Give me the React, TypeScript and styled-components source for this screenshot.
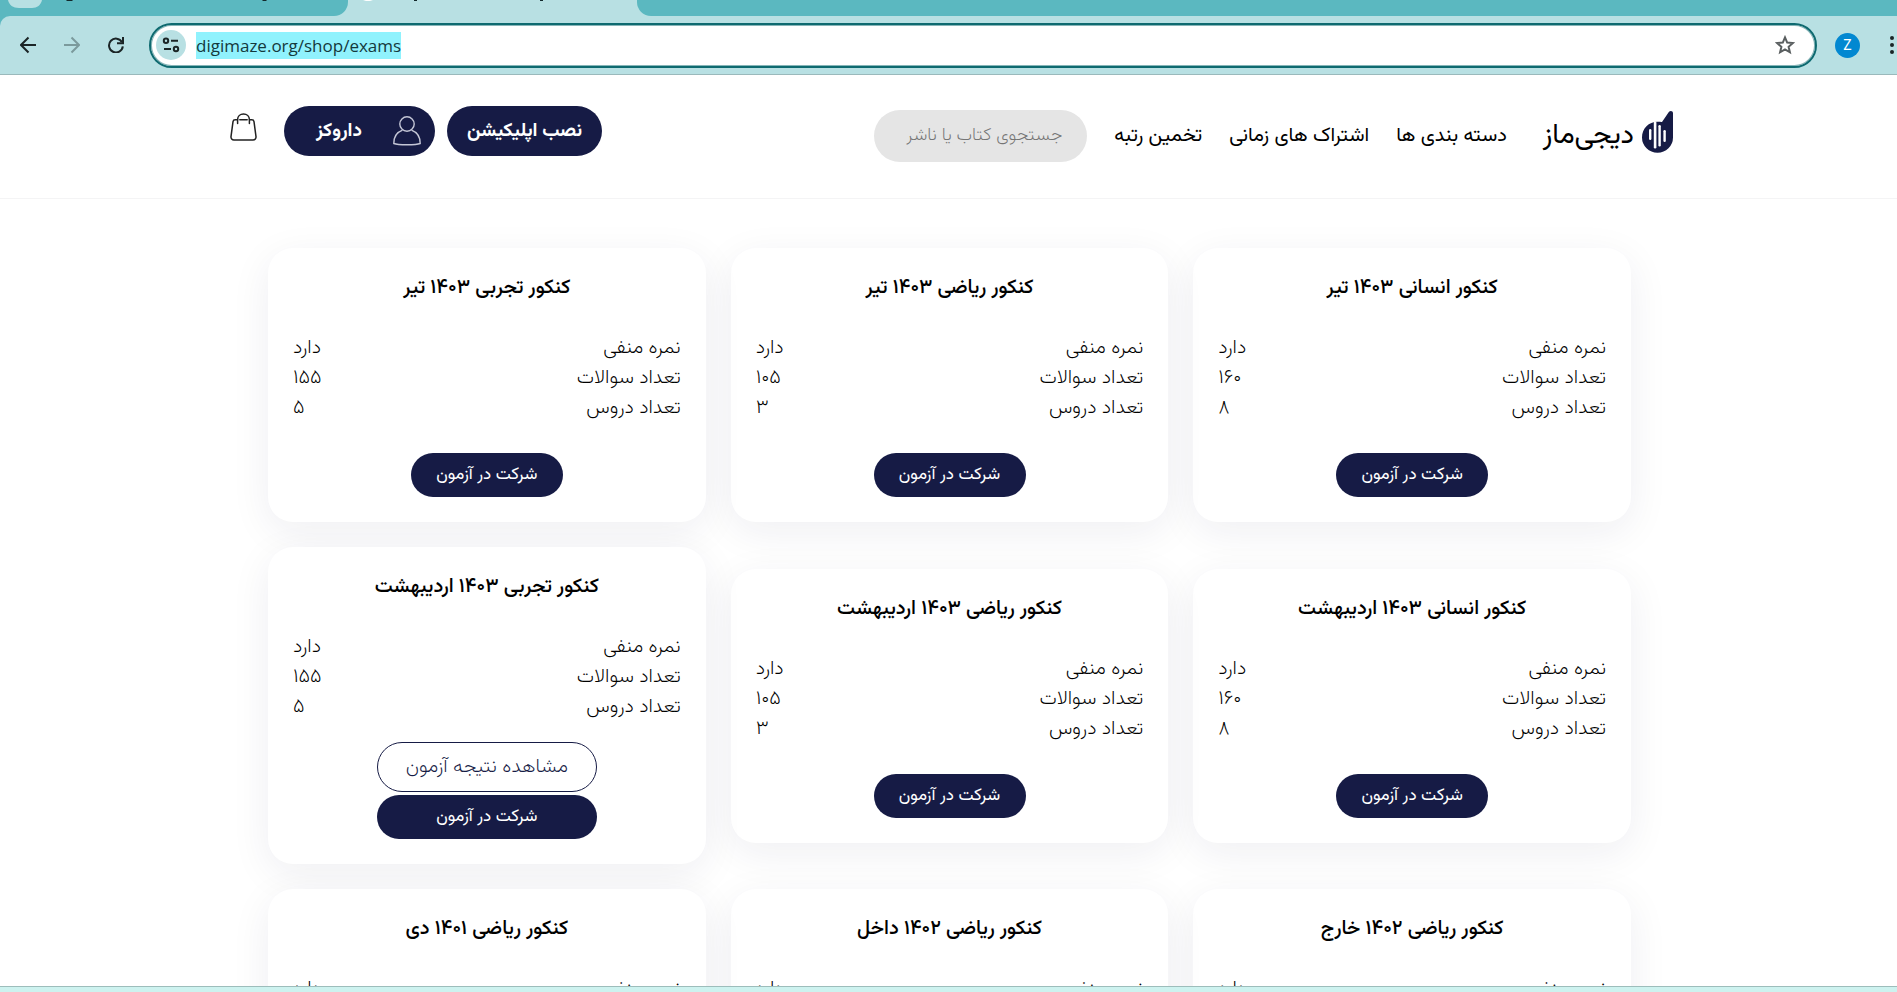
import React from 'react';
import styled, { createGlobalStyle } from 'styled-components';

const navy = '#161b45';
const persian = 'Vazirmatn, "DejaVu Sans", sans-serif';

const GlobalStyle = createGlobalStyle`
  * { box-sizing: border-box; }
  body { margin: 0; background: #fff; }
  button, input { font-family: inherit; }
`;

const Window = styled.div`
  height: 100vh;
  display: flex;
  flex-direction: column;
  overflow: hidden;
`;

/* ---------- browser chrome ---------- */

const TabStrip = styled.div`
  height: 16px;
  flex: none;
  display: flex;
  background: #b8e0e3;
`;

const BackgroundTab = styled.div`
  width: 348px;
  background: #5bb8c0;
  border-bottom-right-radius: 14px;
`;

const ActiveTab = styled.div`
  width: 289px;
`;

const StripRest = styled.div`
  flex: 1;
  background: #5bb8c0;
  border-bottom-left-radius: 14px;
`;

const ToolbarBack = styled.div`
  flex: none;
  background: #5bb8c0;
`;

const Toolbar = styled.div`
  height: 59px;
  display: flex;
  align-items: center;
  padding-left: 17px;
  background: #b8e0e3;
  border-bottom: 1px solid #9ab9bb;
  border-top-left-radius: 10px;
`;

const ToolButton = styled.button<{ $dim?: boolean }>`
  width: 21px;
  height: 24px;
  margin-right: 23px;
  padding: 0;
  border: 0;
  background: none;
  color: ${p => (p.$dim ? '#7b9a9c' : '#1b2526')};
  display: flex;
  align-items: center;
  justify-content: center;
`;

const AddressBar = styled.div`
  flex: 1;
  height: 45px;
  display: flex;
  align-items: center;
  padding: 0 20px 0 5px;
  background: #fff;
  border: 2px solid #0e6a70;
  border-radius: 23px;
  box-shadow: inset 0 0 0 1px #86b5b8;
`;

const SiteInfo = styled.button`
  width: 30px;
  height: 30px;
  padding: 0;
  border: 0;
  border-radius: 50%;
  background: #b8e0e3;
  display: flex;
  align-items: center;
  justify-content: center;
`;

const Url = styled.div`
  flex: 1;
  margin-left: 10px;
`;

const UrlText = styled.span`
  display: inline-block;
  background: #90f2fd;
  color: #14393c;
  font: 17px/27px "Open Sans", sans-serif;
`;

const StarButton = styled.button`
  padding: 0;
  border: 0;
  background: none;
  display: flex;
`;

const Avatar = styled.button`
  width: 25px;
  height: 25px;
  margin-left: 18px;
  padding: 0;
  border: 0;
  border-radius: 50%;
  background: #0288d1;
  color: #fff;
  font: 14px/25px Roboto, sans-serif;
`;

const MenuButton = styled.button`
  margin: 0 3px 0 30px;
  padding: 0;
  border: 0;
  background: none;
  display: flex;
`;

const BottomEdge = styled.div`
  flex: none;
  height: 6px;
  background: #cdf2ef;
  border-top: 1px solid #9dbdbb;
`;

/* ---------- site ---------- */

const Page = styled.div`
  flex: 1;
  min-height: 0;
  overflow-y: auto;
  scrollbar-width: none;
  direction: rtl;
  font-family: ${persian};
  color: #000;
`;

const Header = styled.header`
  height: 124px;
  display: flex;
  align-items: flex-start;
  justify-content: space-between;
  padding: 31px 224px 0 230px;
  border-bottom: 1px solid #f4f4f5;
  @media (max-width: 1400px) { padding-left: 24px; padding-right: 24px; }
`;

const Nav = styled.nav`
  display: flex;
  align-items: center;
  gap: 27px;
  height: 52px;
  margin-top: 4px;
`;

const Logo = styled.a`
  display: flex;
  align-items: flex-start;
  gap: 8px;
  margin-left: 9px;
  color: #000;
  font-size: 28px;
  line-height: 50px;
  text-decoration: none;
`;

const NavLink = styled.a`
  color: #000;
  font-size: 20px;
  line-height: 30px;
  text-decoration: none;
  white-space: nowrap;
`;

const Search = styled.input`
  width: 213px;
  height: 52px;
  padding: 0 25px;
  border: 0;
  border-radius: 26px;
  background: #e5e5e5;
  font-size: 18px;
  font-weight: 200;
  &::placeholder { color: #757575; opacity: 1; }
`;

const Account = styled.div`
  display: flex;
  align-items: flex-start;
  gap: 12px;
`;

const HeaderButton = styled.button<{ $width: number }>`
  width: ${p => p.$width}px;
  height: 50px;
  padding: 0 14px;
  border: 0;
  border-radius: 25px;
  background: ${navy};
  color: #fff;
  font-size: 19px;
  font-weight: 700;
  display: flex;
  align-items: center;
  justify-content: center;
`;

const UserName = styled.span`
  flex: 1;
  text-align: start;
  padding-right: 31px;
`;

const BagButton = styled.button`
  margin: 7px 0 0 0;
  padding: 0 15px 0 0;
  border: 0;
  background: none;
  display: flex;
`;

const Exams = styled.main`
  display: grid;
  grid-template-columns: repeat(3, 1fr);
  align-items: center;
  gap: 25px;
  padding: 49px 266px 49px 268px;
  @media (max-width: 1400px) { padding-left: 24px; padding-right: 24px; }
`;

const Card = styled.article`
  padding: 25px;
  border-radius: 25px;
  background: #fff;
  box-shadow: 0 10px 40px rgba(22, 27, 69, 0.07);
  display: flex;
  flex-direction: column;
  align-items: center;
`;

const CardTitle = styled.h2`
  margin: 0 0 30px;
  font-size: 20px;
  line-height: 30px;
  font-weight: 500;
`;

const Facts = styled.dl`
  align-self: stretch;
  margin: 0;
  font-size: 20px;
  line-height: 30px;
  font-weight: 200;
`;

const Fact = styled.div`
  display: flex;
  justify-content: space-between;
  dd { margin: 0; }
`;

const Actions = styled.div<{ $double: boolean }>`
  display: flex;
  flex-direction: column;
  gap: 3px;
  width: ${p => (p.$double ? 220 : 152)}px;
  padding-top: ${p => (p.$double ? 20 : 30)}px;
`;

const StartButton = styled.button`
  height: 44px;
  padding: 0;
  border: 0;
  border-radius: 22px;
  background: ${navy};
  color: #fff;
  font-size: 17px;
`;

const ResultButton = styled.button`
  height: 50px;
  padding: 0;
  border: 1px solid ${navy};
  border-radius: 25px;
  background: #fff;
  color: ${navy};
  font-size: 20px;
  font-weight: 200;
`;

type Exam = { title: string; questions: string; lessons: string; taken?: boolean };

const exams: Exam[] = [
  { title: 'کنکور انسانی ۱۴۰۳ تیر', questions: '۱۶۰', lessons: '۸' },
  { title: 'کنکور ریاضی ۱۴۰۳ تیر', questions: '۱۰۵', lessons: '۳' },
  { title: 'کنکور تجربی ۱۴۰۳ تیر', questions: '۱۵۵', lessons: '۵' },
  { title: 'کنکور انسانی ۱۴۰۳ اردیبهشت', questions: '۱۶۰', lessons: '۸' },
  { title: 'کنکور ریاضی ۱۴۰۳ اردیبهشت', questions: '۱۰۵', lessons: '۳' },
  { title: 'کنکور تجربی ۱۴۰۳ اردیبهشت', questions: '۱۵۵', lessons: '۵', taken: true },
  { title: 'کنکور ریاضی ۱۴۰۲ خارج', questions: '۱۰۵', lessons: '۳' },
  { title: 'کنکور ریاضی ۱۴۰۲ داخل', questions: '۱۰۵', lessons: '۳' },
  { title: 'کنکور ریاضی ۱۴۰۱ دی', questions: '۱۰۵', lessons: '۳' },
];

const ExamCard = ({ exam }: { exam: Exam }) => (
  <Card>
    <CardTitle>{exam.title}</CardTitle>
    <Facts>
      <Fact><dt>نمره منفی</dt><dd>دارد</dd></Fact>
      <Fact><dt>تعداد سوالات</dt><dd>{exam.questions}</dd></Fact>
      <Fact><dt>تعداد دروس</dt><dd>{exam.lessons}</dd></Fact>
    </Facts>
    <Actions $double={!!exam.taken}>
      {exam.taken && <ResultButton>مشاهده نتیجه آزمون</ResultButton>}
      <StartButton>شرکت در آزمون</StartButton>
    </Actions>
  </Card>
);

const ArrowIcon = ({ flip }: { flip?: boolean }) => (
  <svg width="16" height="18" viewBox="0 0 16 18" fill="none" stroke="currentColor" strokeWidth="2">
    {flip ? <path d="M0 9H14.5M7.5 1.5L15 9L7.5 16.5" /> : <path d="M16 9H1.5M8.5 1.5L1 9L8.5 16.5" />}
  </svg>
);

const ReloadIcon = () => (
  <svg width="16" height="16" viewBox="0 0 16 16" fill="none" stroke="currentColor" strokeWidth="2">
    <path d="M14 5.2A6.9 6.9 0 1 0 14.8 9.3" />
    <path d="M15 0V6.2H9" />
  </svg>
);

const TuneIcon = () => (
  <svg width="18" height="16" viewBox="0 0 18 16" fill="none" stroke="#1b2526" strokeWidth="2">
    <circle cx="4" cy="3.8" r="2.2" />
    <path d="M9 3.8H16M2 12H9" />
    <circle cx="14" cy="12" r="2.2" />
  </svg>
);

const StarIcon = () => (
  <svg width="20" height="20" viewBox="0 0 20 20" fill="none" stroke="#5a5f60" strokeWidth="2">
    <path d="M10 2.4L12.2 7.6L17.9 8.1L13.6 11.8L14.9 17.3L10 14.4L5.1 17.3L6.4 11.8L2.1 8.1L7.8 7.6Z" />
  </svg>
);

const LogoMark = () => (
  <svg width="31" height="42" viewBox="0 0 31 42">
    <path fill={navy} d="M27 0.8C28.6 -0.6 31 0 31 2.3V26.5A15.5 15.2 0 0 1 0 26.5C0 17.5 6.8 10.8 15.5 10.8C17.5 10.8 19 11 20 11Z" />
    <g fill="#fff">
      <rect x="7" y="18" width="2.4" height="11" rx="1.2" />
      <rect x="11.8" y="10.5" width="2.6" height="27" rx="1.2" />
      <rect x="16.4" y="14" width="2.4" height="21.5" rx="1.2" />
      <rect x="21.4" y="19" width="2.4" height="12" rx="1.2" />
    </g>
  </svg>
);

const UserIcon = () => (
  <svg width="28" height="30" viewBox="0 0 28 30" fill="none" stroke="#c4c6d6" strokeWidth="1.4">
    <circle cx="14" cy="8" r="7.2" />
    <path d="M9.5 14.2C4.5 16 0.8 20.8 0.8 27.5C5 29.2 23 29.2 27.2 27.5C27.2 20.8 23.5 16 18.5 14.2" />
  </svg>
);

const BagIcon = () => (
  <svg width="27" height="28" viewBox="0 0 27 28" fill="none" stroke="#222" strokeWidth="1.5" strokeLinecap="round">
    <path d="M7.5 6.8H5.2C4 6.8 3.2 7.4 3 8.6L1 23.6C0.8 25.6 2 27 4 27H23C25 27 26.2 25.6 26 23.6L24 8.6C23.8 7.4 23 6.8 21.8 6.8H19.5M9.8 6.8H17.2" />
    <path d="M7.6 10.5V6.6C7.6 3.3 10.2 1 13.5 1C16.8 1 19.4 3.3 19.4 6.6V10.5" />
  </svg>
);

export default function App() {
  return (
    <Window>
      <GlobalStyle />
      <TabStrip>
        <BackgroundTab>
          <svg width="340" height="16" viewBox="0 0 340 16">
            <path d="M8 0H42C41 5 37 8 32 8H19C13 8 9 5 8 0Z" fill="#b8e0e3" />
            <path d="M66 0H73L72 1H67ZM262 0H267L266 1H263Z" fill="#12292b" />
          </svg>
        </BackgroundTab>
        <ActiveTab>
          <svg width="280" height="16" viewBox="0 0 280 16">
            <path d="M15 0H25L22 1H18Z" fill="#fff" />
            <path d="M66 0H69V1H66ZM192 0H195V1H192Z" fill="#12292b" />
          </svg>
        </ActiveTab>
        <StripRest />
      </TabStrip>
      <ToolbarBack>
        <Toolbar>
          <ToolButton aria-label="Back"><ArrowIcon /></ToolButton>
          <ToolButton aria-label="Forward" $dim><ArrowIcon flip /></ToolButton>
          <ToolButton aria-label="Reload"><ReloadIcon /></ToolButton>
          <AddressBar>
            <SiteInfo aria-label="Site information"><TuneIcon /></SiteInfo>
            <Url><UrlText>digimaze.org/shop/exams</UrlText></Url>
            <StarButton aria-label="Bookmark"><StarIcon /></StarButton>
          </AddressBar>
          <Avatar>Z</Avatar>
          <MenuButton aria-label="Menu">
            <svg width="4" height="18" viewBox="0 0 4 18" fill="#1b2526">
              <circle cx="2" cy="2" r="2" /><circle cx="2" cy="9" r="2" /><circle cx="2" cy="16" r="2" />
            </svg>
          </MenuButton>
        </Toolbar>
      </ToolbarBack>
      <Page lang="fa">
        <Header>
          <Nav>
            <Logo href="#"><LogoMark /><span>دیجی‌ماز</span></Logo>
            <NavLink href="#">دسته بندی ها</NavLink>
            <NavLink href="#">اشتراک های زمانی</NavLink>
            <NavLink href="#">تخمین رتبه</NavLink>
            <Search type="text" aria-label="جستجو" placeholder="جستجوی کتاب یا ناشر" />
          </Nav>
          <Account>
            <HeaderButton $width={155}>نصب اپلیکیشن</HeaderButton>
            <HeaderButton $width={151}><UserIcon /><UserName>داروکز</UserName></HeaderButton>
            <BagButton aria-label="سبد خرید"><BagIcon /></BagButton>
          </Account>
        </Header>
        <Exams>
          {exams.map(exam => <ExamCard key={exam.title} exam={exam} />)}
        </Exams>
      </Page>
      <BottomEdge />
    </Window>
  );
}
